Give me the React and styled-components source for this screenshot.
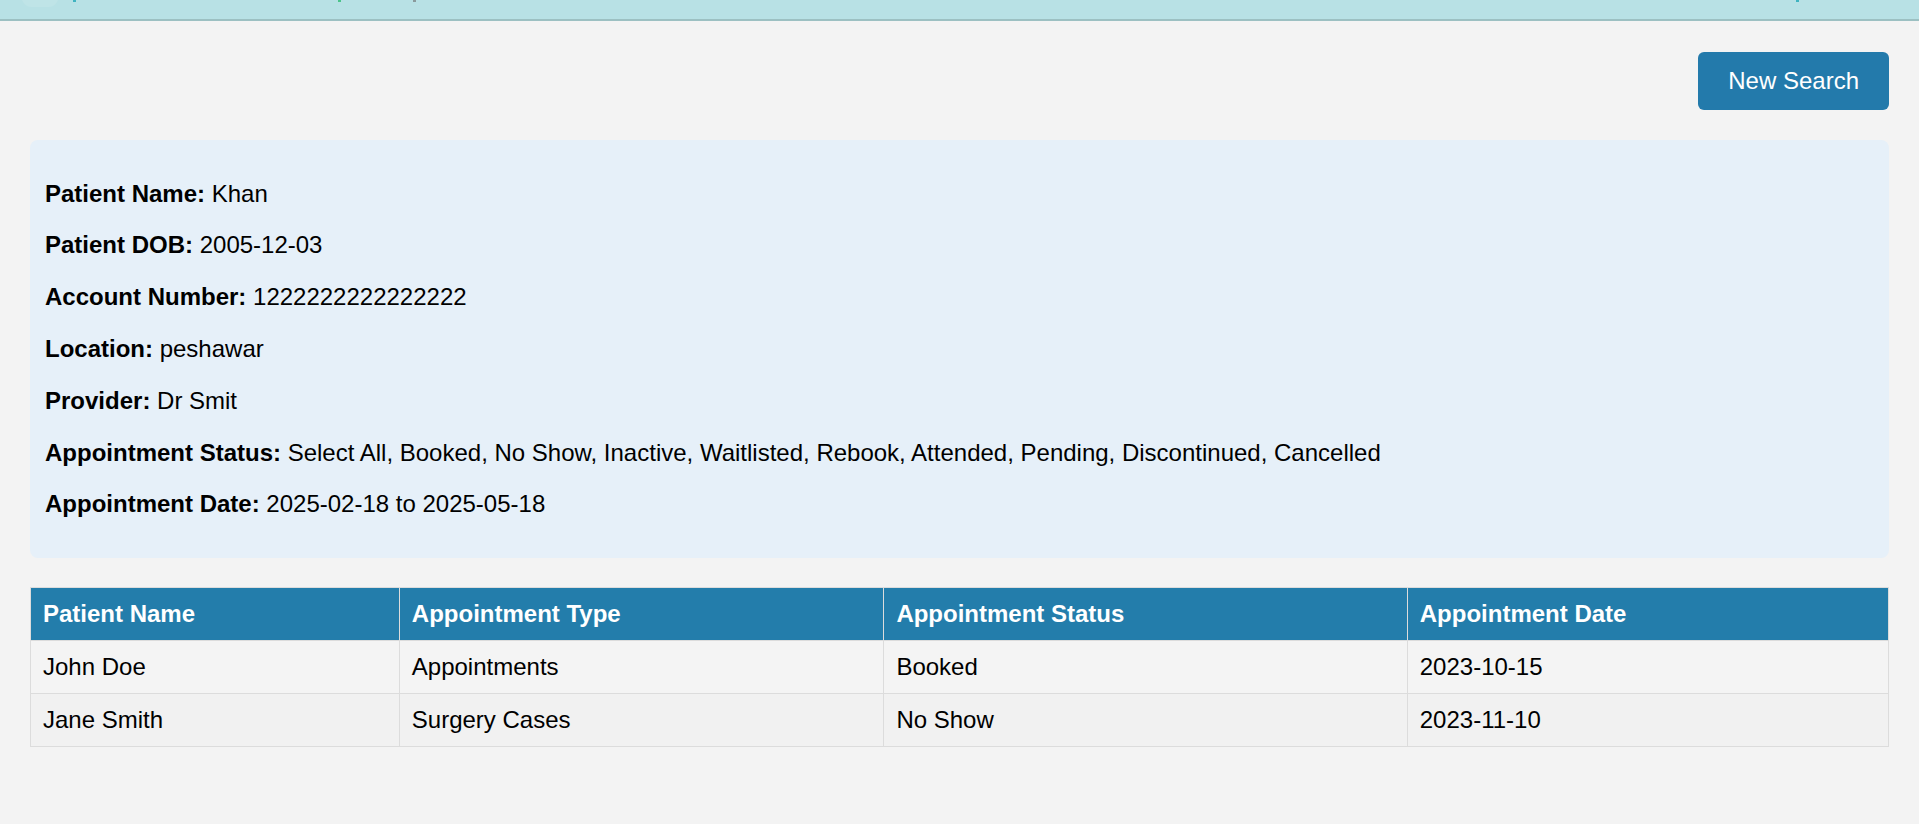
import React from 'react'
import styled, { createGlobalStyle } from 'styled-components'

const GlobalStyle = createGlobalStyle`
  html, body {
    margin: 0;
    padding: 0;
    background: #f3f3f3;
    font-family: "Liberation Sans", Arial, sans-serif;
    color: #000;
  }
`;

const TopBar = styled.header`
  height: 19px;
  background: #b8e1e5;
  border-bottom: 2px solid #9cc0c2;
  display: flex;
  align-items: flex-start;
  padding: 0 0 0 22px;
  overflow: hidden;
`;

const Avatar = styled.span`
  width: 36px;
  height: 9px;
  margin-top: -2px;
  border-radius: 0 0 18px 18px;
  background: #bfe4e7;
  display: flex;
  justify-content: center;
  gap: 2px;
  span {
    width: 7px;
    height: 2px;
    background: #8a9a9c;
  }
`;

const Dot = styled.span`
  width: 3px;
  height: 2px;
  background: ${(p) => p.color};
  margin-left: ${(p) => p.gap}px;
`;

const Page = styled.main`
  padding: 31px 30px 60px;
`;

const Actions = styled.div`
  display: flex;
  justify-content: flex-end;
  margin-bottom: 30px;
`;

const Button = styled.button`
  background: #237aab;
  color: #fff;
  border: none;
  border-radius: 6px;
  padding: 15px 30px;
  font-family: inherit;
  font-size: 24px;
  line-height: 27.6px;
  cursor: pointer;
`;

const InfoPanel = styled.section`
  background: #e6f0f9;
  border-radius: 8px;
  padding: 16px 15px;
  margin-bottom: 29px;
`;

const InfoLine = styled.p`
  margin: 24px 0;
  font-size: 24px;
  line-height: 27.8px;
  strong {
    font-weight: 700;
  }
`;

const Table = styled.table`
  width: 100%;
  border-collapse: collapse;
  font-size: 24px;
  line-height: 28px;
  border: 1px solid #dcdcdc;
`;

const Th = styled.th`
  width: ${(p) => p.w};
  background: #237dab;
  color: #fff;
  font-weight: 700;
  text-align: left;
  padding: 12px 12px;
  border: 1px solid #dcdcdc;
`;

const Row = styled.tr`
  background: ${(p) => (p.alt ? '#f1f1f1' : '#f4f4f4')};
`;

const Td = styled.td`
  padding: 12px 12px;
  border: 1px solid #dcdcdc;
`;

const info = [
  ['Patient Name', 'Khan'],
  ['Patient DOB', '2005-12-03'],
  ['Account Number', '1222222222222222'],
  ['Location', 'peshawar'],
  ['Provider', 'Dr Smit'],
  ['Appointment Status', 'Select All, Booked, No Show, Inactive, Waitlisted, Rebook, Attended, Pending, Discontinued, Cancelled'],
  ['Appointment Date', '2025-02-18 to 2025-05-18'],
];

const columns = [
  ['Patient Name', '19.85%'],
  ['Appointment Type', '26.08%'],
  ['Appointment Status', '28.17%'],
  ['Appointment Date', '25.9%'],
];

const rows = [
  ['John Doe', 'Appointments', 'Booked', '2023-10-15'],
  ['Jane Smith', 'Surgery Cases', 'No Show', '2023-11-10'],
];

export default function App() {
  return (
    <>
      <GlobalStyle />
      <TopBar>
        <Avatar><span /><span /></Avatar>
        <Dot color="#3fb3c0" gap={15} />
        <Dot color="#4cc48a" gap={262} />
        <Dot color="#8a9a9c" gap={72} />
        <Dot color="#3fb3c0" gap={1380} />
      </TopBar>
      <Page>
        <Actions>
          <Button>New Search</Button>
        </Actions>
        <InfoPanel>
          {info.map(([label, value]) => (
            <InfoLine key={label}>
              <strong>{label}:</strong> {value}
            </InfoLine>
          ))}
        </InfoPanel>
        <Table>
          <thead>
            <tr>
              {columns.map(([name, w]) => (
                <Th key={name} w={w}>{name}</Th>
              ))}
            </tr>
          </thead>
          <tbody>
            {rows.map((r, i) => (
              <Row key={r[0]} alt={i % 2 === 1}>
                {r.map((c) => (
                  <Td key={c}>{c}</Td>
                ))}
              </Row>
            ))}
          </tbody>
        </Table>
      </Page>
    </>
  )
}
